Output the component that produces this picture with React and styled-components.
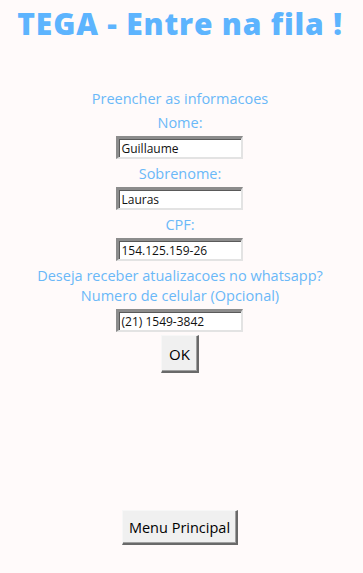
import React, { useEffect, useRef } from 'react'
import styled, { createGlobalStyle } from 'styled-components'

const GlobalStyle = createGlobalStyle`
  html, body {
    margin: 0;
    padding: 0;
    background: #fffafa;
  }
`;

const Window = styled.div`
  box-sizing: border-box;
  width: 363px;
  height: 573px;
  padding-right: 3px;
  background: #fffafa;
  display: flex;
  flex-direction: column;
  align-items: center;
  font-family: "Open Sans", "Noto Sans", sans-serif;
  overflow: hidden;
`;

const Title = styled.h1`
  margin: 4px 0 0;
  font-size: 30px;
  line-height: 40px;
  font-weight: 800;
  color: #5db4fe;
  letter-spacing: 0.8px;
  white-space: nowrap;
`;

const Form = styled.div`
  margin-top: 45px;
  display: flex;
  flex-direction: column;
  align-items: center;
`;

const Label = styled.div`
  font-size: 14.5px;
  line-height: 20px;
  color: #6ab8f8;
  margin-bottom: ${p => (p.$after ? p.$after : 0)}px;
`;

const Entry = styled.input`
  box-sizing: border-box;
  width: 127px;
  height: 23px;
  margin: 3px 0 5px;
  padding: 1px 2px 0 2px;
  background: #ffffff;
  border-style: solid;
  border-width: 3px 2px 2px 3px;
  border-color: #8c8c8c #e3e3e3 #e3e3e3 #8c8c8c;
  box-shadow: inset 1px 1px 0 #5a5a5a;
  font-family: "Open Sans", "Noto Sans", sans-serif;
  font-size: 12px;
  color: #111;
  caret-color: #000;
  outline: none;
`;

const Button = styled.button`
  box-sizing: border-box;
  height: ${p => p.$h}px;
  padding: 0 ${p => p.$pad}px;
  margin-top: ${p => p.$top}px;
  background: #f0f0f0;
  border-style: solid;
  border-width: 1px 2px 2px 1px;
  border-color: #f7f7f7 #696969 #696969 #f7f7f7;
  box-shadow: inset -1px -1px 0 #a0a0a0;
  font-family: "Open Sans", "Noto Sans", sans-serif;
  font-size: ${p => p.$size}px;
  color: #000;
  cursor: pointer;
`;

const Spacer = styled.div`
  flex: 1;
`;

const Footer = styled.div`
  padding-bottom: 28px;
`;

const fields = [
  { label: 'Nome:', value: 'Guillaume' },
  { label: 'Sobrenome:', value: 'Lauras' },
  { label: 'CPF:', value: '154.125.159-26' },
]

export default function App() {
  const phone = useRef(null)

  useEffect(() => {
    const el = phone.current
    if (el) {
      el.focus()
      el.setSelectionRange(el.value.length, el.value.length)
    }
  }, [])

  return (
    <Window>
      <GlobalStyle />
      <Title>TEGA - Entre na fila !</Title>
      <Form>
        <Label $after={4}>Preencher as informacoes</Label>
        {fields.map(f => (
          <React.Fragment key={f.label}>
            <Label>{f.label}</Label>
            <Entry defaultValue={f.value} />
          </React.Fragment>
        ))}
        <Label>Deseja receber atualizacoes no whatsapp?</Label>
        <Label>Numero de celular (Opcional)</Label>
        <Entry ref={phone} defaultValue="(21) 1549-3842" />
        <Button $h={38} $pad={7} $top={-2} $size={15}>OK</Button>
      </Form>
      <Spacer />
      <Footer>
        <Button $h={35} $pad={6} $top={0} $size={14.5}>Menu Principal</Button>
      </Footer>
    </Window>
  )
}
